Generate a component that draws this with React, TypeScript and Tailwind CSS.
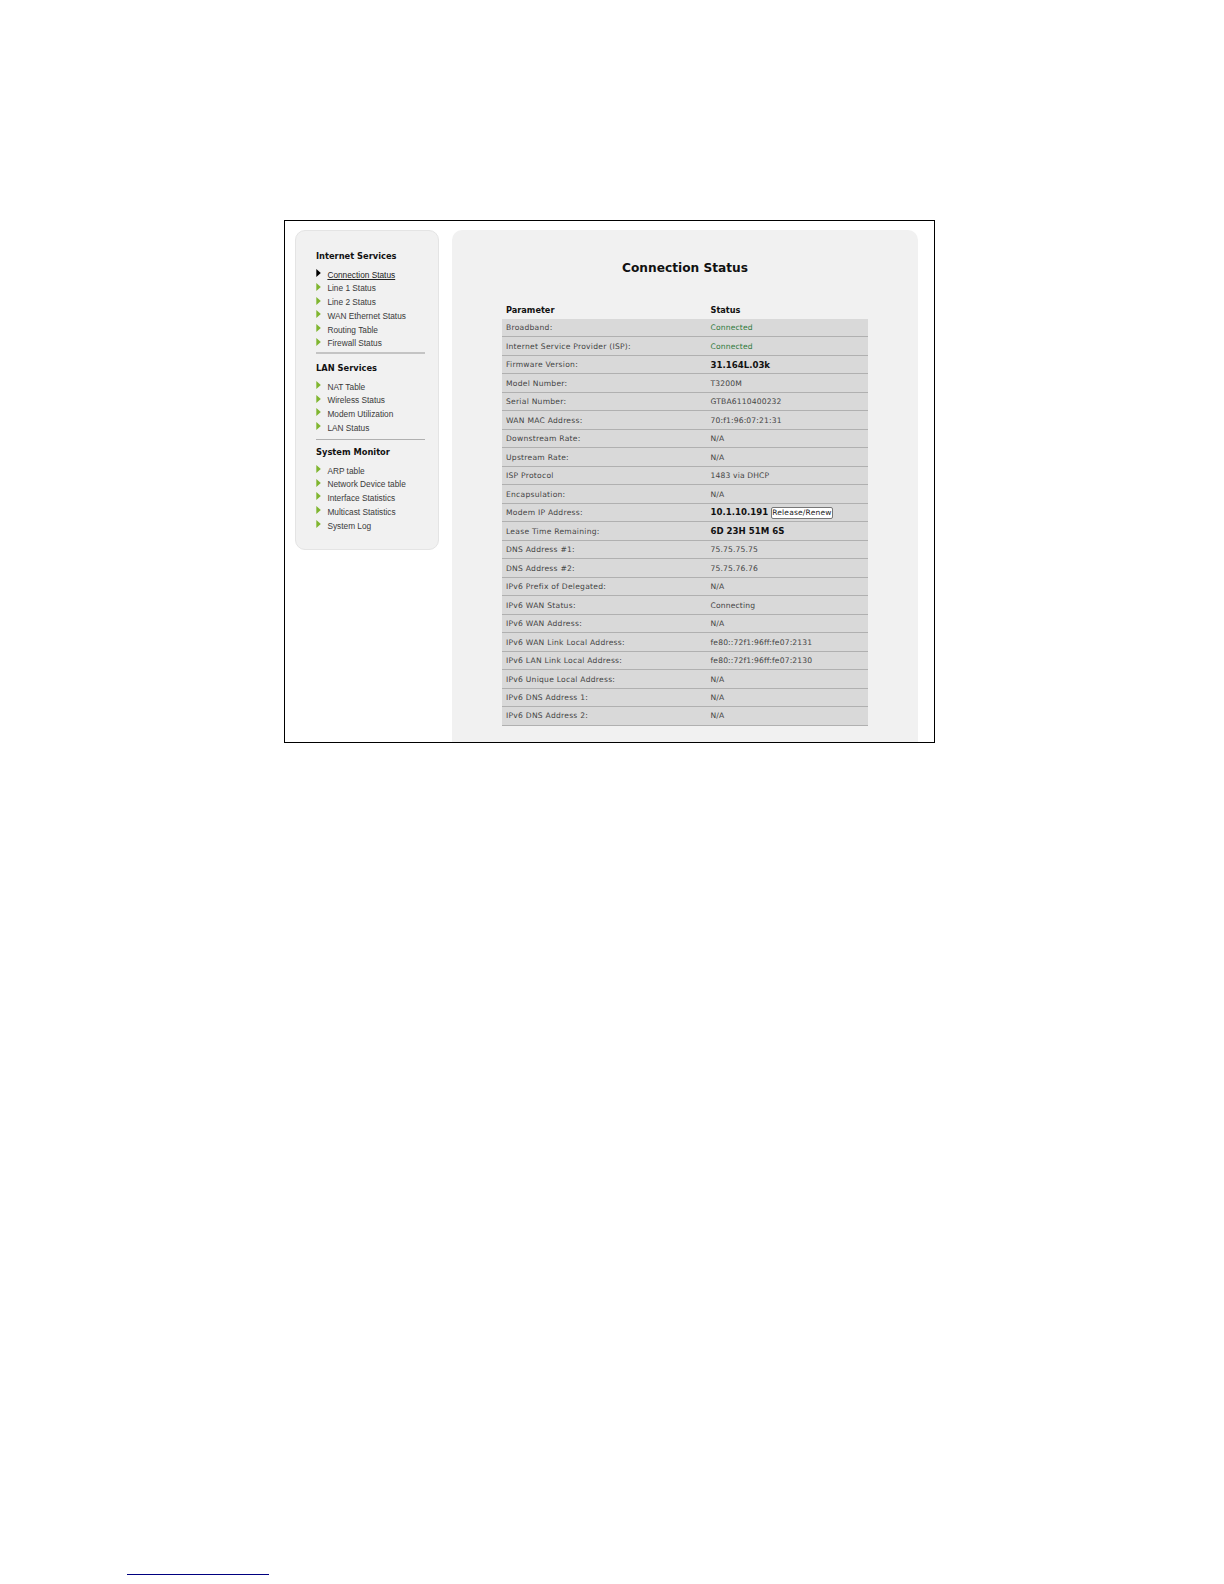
const groups = [
  { title: "Internet Services", links: ["Connection Status", "Line 1 Status", "Line 2 Status", "WAN Ethernet Status", "Routing Table", "Firewall Status"] },
  { title: "LAN Services", links: ["NAT Table", "Wireless Status", "Modem Utilization", "LAN Status"] },
  { title: "System Monitor", links: ["ARP table", "Network Device table", "Interface Statistics", "Multicast Statistics", "System Log"] },
];

type Row = { k: string; v: string; kind?: "green" | "bold" | "button" };
const rows: Row[] = [
  { k: "Broadband:", v: "Connected", kind: "green" },
  { k: "Internet Service Provider (ISP):", v: "Connected", kind: "green" },
  { k: "Firmware Version:", v: "31.164L.03k", kind: "bold" },
  { k: "Model Number:", v: "T3200M" },
  { k: "Serial Number:", v: "GTBA6110400232" },
  { k: "WAN MAC Address:", v: "70:f1:96:07:21:31" },
  { k: "Downstream Rate:", v: "N/A" },
  { k: "Upstream Rate:", v: "N/A" },
  { k: "ISP Protocol", v: "1483 via DHCP" },
  { k: "Encapsulation:", v: "N/A" },
  { k: "Modem IP Address:", v: "10.1.10.191", kind: "button" },
  { k: "Lease Time Remaining:", v: "6D 23H 51M 6S", kind: "bold" },
  { k: "DNS Address #1:", v: "75.75.75.75" },
  { k: "DNS Address #2:", v: "75.75.76.76" },
  { k: "IPv6 Prefix of Delegated:", v: "N/A" },
  { k: "IPv6 WAN Status:", v: "Connecting" },
  { k: "IPv6 WAN Address:", v: "N/A" },
  { k: "IPv6 WAN Link Local Address:", v: "fe80::72f1:96ff:fe07:2131" },
  { k: "IPv6 LAN Link Local Address:", v: "fe80::72f1:96ff:fe07:2130" },
  { k: "IPv6 Unique Local Address:", v: "N/A" },
  { k: "IPv6 DNS Address 1:", v: "N/A" },
  { k: "IPv6 DNS Address 2:", v: "N/A" },
];

function Arrow({ active }: { active: boolean }) {
  return (
    <svg width="5" height="8" viewBox="0 0 5 8" className="mt-[-5px] shrink-0">
      <path d="M0.3 0 L4.8 4 L0.3 8 Z" fill={active ? "#000000" : "#7fb52f"} />
    </svg>
  );
}

export default function App() {
  return (
    <div className="h-[1584px] w-[1224px] bg-white pt-[220px] font-['DejaVu_Sans',sans-serif]">
      <div className="ml-[284px] flex h-[523px] w-[651px] gap-[13px] overflow-hidden border border-black pl-[10px] pt-[9px]">
        <aside className="h-[320px] w-[144px] shrink-0 rounded-[10px] border border-[#e4e4e4] bg-[#f1f1f1] pl-[20px] pr-[13px] pt-[17px]">
          {groups.map((g, i) => (
            <div key={g.title}>
              <h3 className="h-[16px] text-[8.3px] font-bold leading-[16px] text-[#111]">{g.title}</h3>
              <ul className="mt-[4.8px]">
                {g.links.map((l, j) => {
                  const active = i === 0 && j === 0;
                  return (
                    <li key={l} className="flex h-[13.7px] items-center gap-[6.4px] font-['Liberation_Sans',sans-serif] text-[8.3px] leading-[13.7px] text-[#3a3a3a]">
                      <Arrow active={active} />
                      <span className={active ? "text-[#222] underline" : ""}>{l}</span>
                    </li>
                  );
                })}
              </ul>
              {i < 2 && <div className={i === 0 ? "mb-[5.5px] mt-[1.5px] h-[2px] bg-[#c4c4c4]" : "mb-[4px] mt-[3.5px] h-px bg-[#b0b0b0]"} />}
            </div>
          ))}
        </aside>
        <main className="h-[560px] w-[466px] shrink-0 rounded-[10px] bg-[#f1f1f1] pl-[50px] pt-[29px]">
          <h1 className="ml-[120px] text-[12.2px] font-bold leading-[18px] text-[#111]">Connection Status</h1>
          <div className="w-[366px] pt-[25px]">
            <div className="flex h-[17px] items-center pb-[1px] text-[8.2px] font-bold text-[#111]">
              <span className="w-[208.5px] pl-[4px]">Parameter</span>
              <span>Status</span>
            </div>
            {rows.map((r) => (
              <div key={r.k} className="flex h-[18.49px] items-center border-b border-[#b0b0b0] bg-[#d9d9d9] pt-[0.5px] text-[7.6px] tracking-[0.25px] text-[#444]">
                <span className="w-[208.5px] shrink-0 pl-[4px]">{r.k}</span>
                {r.kind === "bold" || r.kind === "button" ? (
                  <span className="text-[8.6px] font-bold tracking-normal text-[#111]">{r.v}</span>
                ) : (
                  <span className={r.kind === "green" ? "tracking-[0.15px] text-[#2f7a3c]" : "tracking-[0.15px]"}>{r.v}</span>
                )}
                {r.kind === "button" && (
                  <button className="ml-[3px] h-[12px] rounded-[2px] border border-[#777] bg-white text-[7.5px] leading-[10px] tracking-[0.2px] text-[#222]">Release/Renew</button>
                )}
              </div>
            ))}
          </div>
        </main>
      </div>
      <div className="ml-[127px] mt-[831px] h-px w-[142px] bg-[#000080]" />
    </div>
  );
}
